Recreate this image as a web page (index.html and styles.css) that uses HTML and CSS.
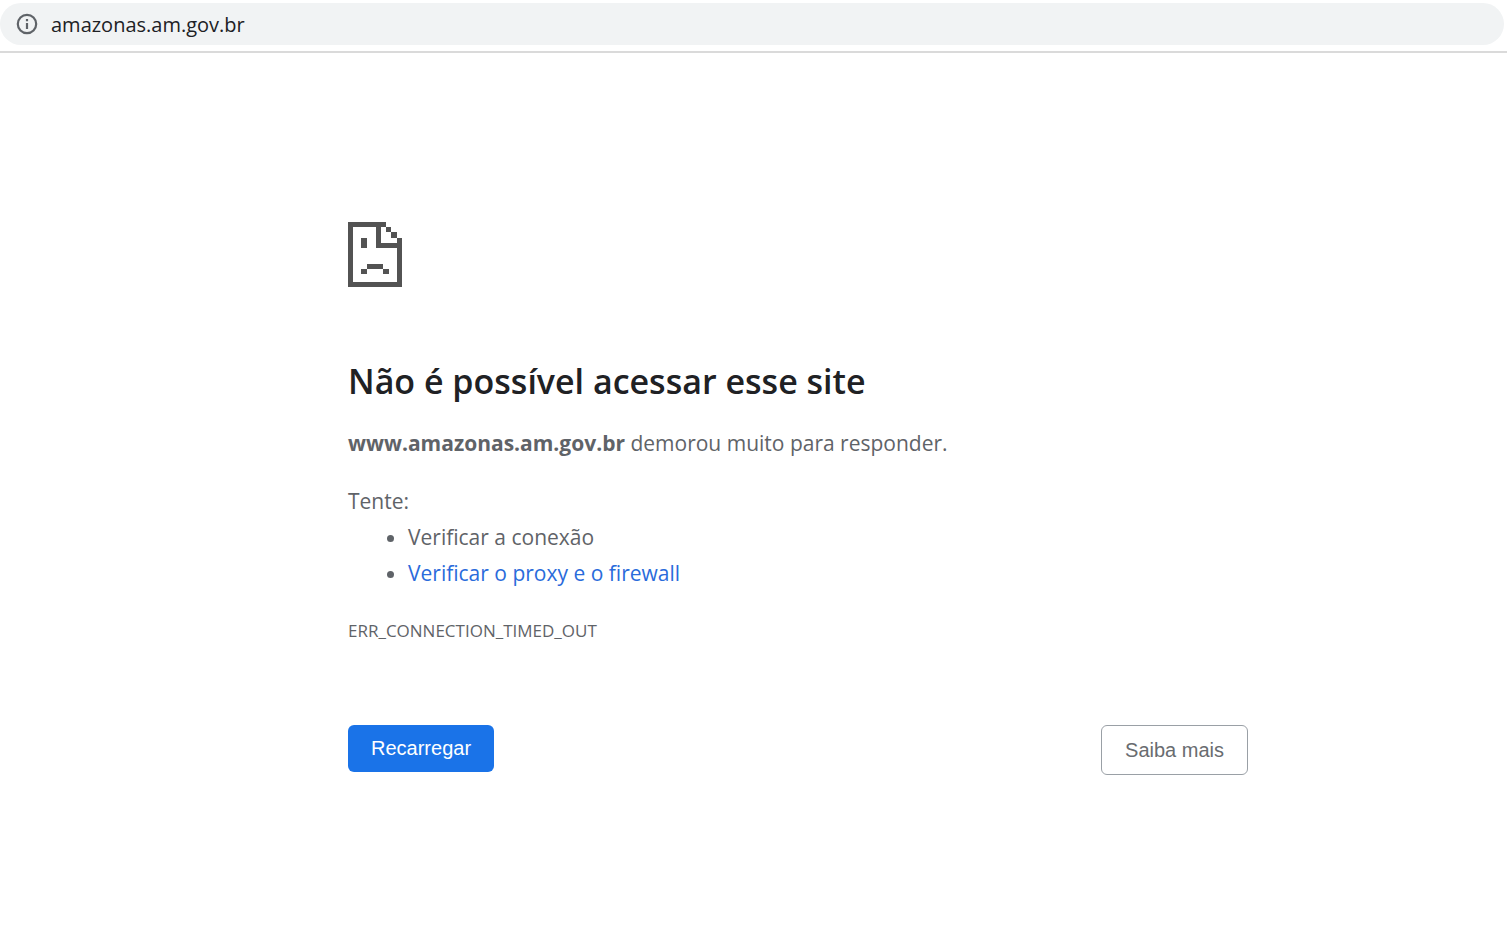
FILE: index.html
```html
<!DOCTYPE html>
<html lang="pt-BR">
<head>
<meta charset="utf-8">
<meta name="viewport" content="width=device-width, initial-scale=1">
<title>amazonas.am.gov.br</title>
<link rel="stylesheet" href="styles.css">
</head>
<body>
<header class="toolbar">
  <div class="omnibox">
    <svg class="info-icon" viewBox="0 0 22 22" aria-hidden="true">
      <circle cx="11" cy="11" r="9.2" fill="none" stroke="currentColor" stroke-width="2.2"/>
      <path d="M9.9 6h2.2v2.2H9.900zM9.900 9.900h2.200v6H9.900z" fill="currentColor"/>
    </svg>
    <input class="address" type="text" value="amazonas.am.gov.br" aria-label="Endereço" spellcheck="false">
  </div>
</header>
<main class="error-page">
  <svg class="sad-page" viewBox="0 0 162 195" shape-rendering="crispEdges" aria-hidden="true">
    <path fill="currentColor" d="M0 0H114V15H99V63H147V47H162V195H0ZM15 15V180H147V78H83V15ZM114 15H130V31H114ZM130 31H147V47H130ZM40 47H57V78H40ZM57 125H105V141H57ZM40 141H57V156H40ZM105 141H122V156H105Z" fill-rule="evenodd"/>
  </svg>
  <h1 class="title">Não é possível acessar esse site</h1>
  <p class="summary"><strong>www.amazonas.am.gov.br</strong> demorou muito para responder.</p>
  <div class="suggestions">
    <p class="lead">Tente:</p>
    <ul class="list">
      <li>Verificar a conexão</li>
      <li><a class="link" href="#">Verificar o proxy e o firewall</a></li>
    </ul>
  </div>
  <p class="code">ERR_CONNECTION_TIMED_OUT</p>
  <div class="actions">
    <button class="button primary" type="button">Recarregar</button>
    <button class="button secondary" type="button">Saiba mais</button>
  </div>
</main>
</body>
</html>
```
FILE: styles.css
```css
* {
  box-sizing: border-box;
}

body {
  margin: 0;
  background: #fff;
  color: #5f6368;
  font-family: "Segoe UI", "Open Sans", "Noto Sans", sans-serif;
  font-size: 21px;
  line-height: 36px;
}

.toolbar {
  padding: 3px 3px 6px 0;
  border-bottom: 2px solid #dadada;
}

.omnibox {
  display: flex;
  align-items: center;
  gap: 13px;
  height: 42px;
  padding: 0 16px;
  border-radius: 21px;
  background: #f1f3f4;
}

.info-icon {
  flex: none;
  width: 22px;
  height: 22px;
}

.address {
  flex: 1;
  min-width: 0;
  padding: 2px 0 0;
  border: 0;
  outline: 0;
  background: transparent;
  color: #202124;
  font: inherit;
  font-size: 20px;
}

.error-page {
  max-width: 900px;
  margin: 169px 24px 0 348px;
}

.sad-page {
  display: block;
  width: 54px;
  height: 65px;
  color: #535353;
}

.title {
  margin: 70px 0 0;
  color: #202124;
  font-size: 34px;
  font-weight: 600;
  line-height: 48px;
}

.summary {
  margin: 20px 0 0;
}

.suggestions {
  margin-top: 22px;
}

.lead {
  margin: 0;
}

.list {
  margin: 0;
  padding-left: 60px;
}

.link {
  color: #2a6bdb;
  text-decoration: none;
}

.code {
  margin: 22px 0 0;
  font-size: 17px;
}

.actions {
  display: flex;
  align-items: flex-start;
  justify-content: space-between;
  margin-top: 76px;
}

.button {
  padding: 11px 23px;
  border: 0;
  border-radius: 6px;
  font-family: Arial, "Liberation Sans", sans-serif;
  font-size: 20px;
  line-height: 25px;
  cursor: pointer;
}

.primary {
  background: #1a73e8;
  color: #fff;
}

.secondary {
  padding: 12px 23px;
  border: 1px solid #9aa0a6;
  background: #fff;
  color: #696c70;
  line-height: 24px;
}
```
